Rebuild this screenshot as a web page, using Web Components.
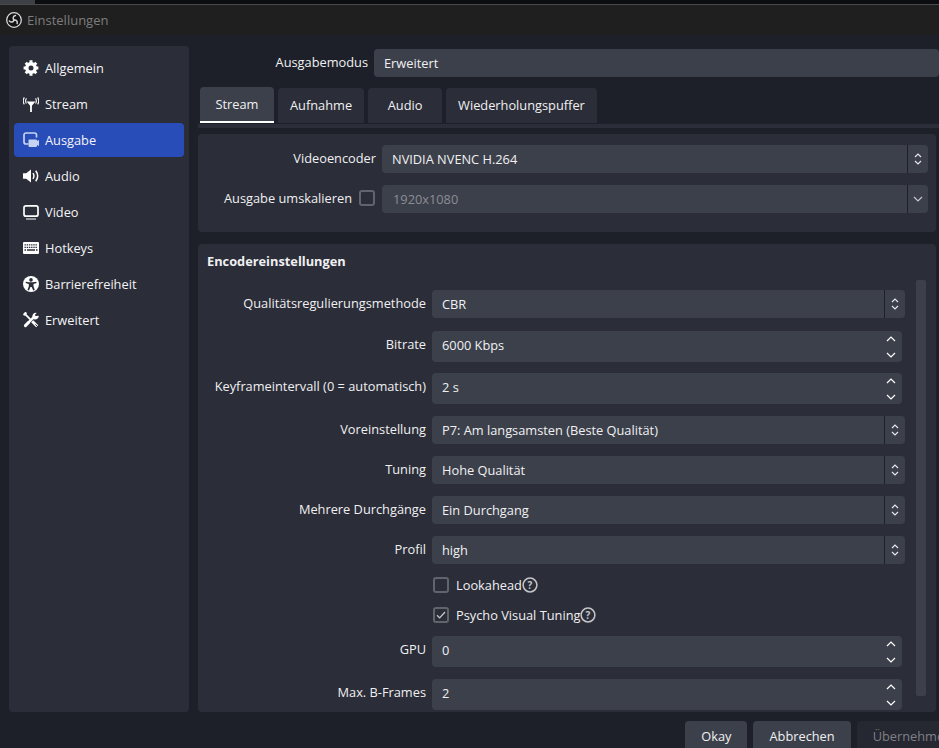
<!DOCTYPE html>
<html lang="de">
<head>
<meta charset="utf-8">
<title>Einstellungen</title>
<style>
  html, body { margin: 0; height: 100%; background: #1e2029; overflow: hidden; }
  body { font: 12.8px "Open Sans", "Liberation Sans", sans-serif; color: #f0f0f2; }
</style>
</head>
<body>
<settings-window>
  <settings-nav slot="nav">
    <nav-item icon="gear">Allgemein</nav-item>
    <nav-item icon="antenna">Stream</nav-item>
    <nav-item icon="output" active>Ausgabe</nav-item>
    <nav-item icon="speaker">Audio</nav-item>
    <nav-item icon="monitor">Video</nav-item>
    <nav-item icon="keyboard">Hotkeys</nav-item>
    <nav-item icon="person">Barrierefreiheit</nav-item>
    <nav-item icon="tools">Erweitert</nav-item>
  </settings-nav>

  <form-row slot="mode" col="170">
    <span slot="label">Ausgabemodus</span>
    <value-box flat>Erweitert</value-box>
  </form-row>

  <tab-bar slot="tabs">
    <tab-item active>Stream</tab-item>
    <tab-item style="margin-top:1px">Aufnahme</tab-item>
    <tab-item style="margin-top:1px">Audio</tab-item>
    <tab-item style="margin-top:1px">Wiederholungspuffer</tab-item>
  </tab-bar>

  <settings-panel slot="encoder">
    <form-row col="178">
      <span slot="label">Videoencoder</span>
      <value-box>NVIDIA NVENC H.264</value-box>
    </form-row>
    <form-row col="178">
      <span slot="label">Ausgabe umskalieren</span>
      <check-box slot="label" style="margin-right:1px"></check-box>
      <value-box arrow="down" disabled>1920x1080</value-box>
    </form-row>
  </settings-panel>

  <encoder-panel slot="settings">
    <span slot="title">Encodereinstellungen</span>
    <form-row col="228">
      <span slot="label">Qualitätsregulierungsmethode</span>
      <value-box>CBR</value-box>
    </form-row>
    <form-row col="228" style="margin-top:1px">
      <span slot="label">Bitrate</span>
      <value-box spin>6000 Kbps</value-box>
    </form-row>
    <form-row col="228" style="margin-top:-1px">
      <span slot="label">Keyframeintervall (0 = automatisch)</span>
      <value-box spin>2 s</value-box>
    </form-row>
    <form-row col="228">
      <span slot="label">Voreinstellung</span>
      <value-box>P7: Am langsamsten (Beste Qualität)</value-box>
    </form-row>
    <form-row col="228">
      <span slot="label">Tuning</span>
      <value-box>Hohe Qualität</value-box>
    </form-row>
    <form-row col="228">
      <span slot="label">Mehrere Durchgänge</span>
      <value-box>Ein Durchgang</value-box>
    </form-row>
    <form-row col="228">
      <span slot="label">Profil</span>
      <value-box>high</value-box>
    </form-row>
    <form-row col="228">
      <check-box label="Lookahead" help></check-box>
    </form-row>
    <form-row col="228">
      <check-box label="Psycho Visual Tuning" help checked></check-box>
    </form-row>
    <form-row col="228">
      <span slot="label">GPU</span>
      <value-box spin>0</value-box>
    </form-row>
    <form-row col="228">
      <span slot="label">Max. B-Frames</span>
      <value-box spin>2</value-box>
    </form-row>
  </encoder-panel>

  <dialog-button slot="footer">Okay</dialog-button>
  <dialog-button slot="footer">Abbrechen</dialog-button>
  <dialog-button slot="footer" disabled>Übernehmen</dialog-button>
</settings-window>

<script>
const ICONS = {
  gear: `<g fill="none" stroke="currentColor"><circle cx="8" cy="8" r="4.200" stroke-width="3.400"/><path stroke-width="3" d="M8 .2v2.800M8 13v2.800M.6 8h2.800M12.600 8h2.800M2.700 2.700l2 2M11.300 11.300l2 2M2.700 13.300l2-2M11.300 4.700l2-2"/></g>`,
  antenna: `<g fill="none" stroke="currentColor"><path stroke-width="1.800" d="M8 7v9"/><path stroke-width="1.500" d="M5.200 6.300h5.600L8 9.500z" fill="currentColor"/><path stroke-width="1.100" d="M3.400 2.200c-1 1.800-1 3.600 0 5.400M1.300 1.400c-1.400 2.400-1.400 4.800 0 7M12.600 2.200c1 1.800 1 3.600 0 5.400M14.700 1.400c1.400 2.400 1.400 4.800 0 7"/></g>`,
  output: `<path fill="none" stroke="#c6d4f2" stroke-width="1.700" d="M5.500 12H3a2 2 0 0 1-2-2V3a2 2 0 0 1 2-2h8.500a2 2 0 0 1 2 2v2.500"/><path fill="#c6d4f2" d="M6 7.500h7a1 1 0 0 1 1 1V9l2-1v6l-2-1v1a1 1 0 0 1-1 1H6.500a1 1 0 0 1-1-1V8a.5.5 0 0 1 .5-.5z"/>`,
  speaker: `<path fill="currentColor" d="M0 5.300h3.200L8 1.600v12.800L3.200 10.700H0z"/><path fill="none" stroke="currentColor" stroke-width="1.500" d="M10 5.200c1.200 1.800 1.200 3.800 0 5.600M12.700 2.800c2.400 3.200 2.400 7.200 0 10.400"/>`,
  monitor: `<rect x="1" y="1.800" width="14" height="10.400" rx="2" fill="none" stroke="currentColor" stroke-width="1.700"/><path d="M3 15h10" stroke="currentColor" stroke-width="1"/>`,
  keyboard: `<rect y="2" width="16" height="12" rx="1" fill="currentColor"/><path stroke="#2b2d38" stroke-width="1.300" stroke-dasharray="1.400 .8" d="M1.500 4.800h13M1.500 7.400h13"/><path stroke="#2b2d38" stroke-width="1.300" d="M1.500 10h1.500M4 10h8M13 10h1.500"/>`,
  person: `<circle cx="8" cy="8" r="8" fill="currentColor"/><circle cx="8" cy="3.900" r="1.800" fill="#2b2d38"/><path fill="#2b2d38" d="M2.800 5.700l3.300.6h3.800l3.300-.6.400 1.300-3.100 1v2.200l1.300 3.700-1.500.5L8.600 11h-1.200l-1.400 3.400-1.500-.5 1.300-3.700V8l-3.100-1z"/>`,
  tools: `<g fill="none" stroke="currentColor"><path stroke-width="1.800" d="M1.800 1.800l6 6"/><path stroke-width="2.600" stroke-linecap="round" d="M1.500 2.300l1-1"/><path stroke-width="2.500" d="M4.800 11.200l6-6"/><path stroke-width="3" stroke-linecap="round" d="M2.400 13.600l3-3"/><path stroke-width="3" d="M9.200 9.200l5 5"/></g><path fill="currentColor" d="M15.800 3.700a3.600 3.600 0 0 1-4.800 3.500L9.600 5.800a3.600 3.600 0 0 1 4.100-4.900l-2 2.100 1 1.100z"/><path stroke="#2b2d38" stroke-width="1" d="M12.400 12.400l2.400 2.400"/>`
};

class NavItem extends HTMLElement {
  constructor() {
    super();
    this.attachShadow({ mode: "open" });
  }
  connectedCallback() {
    const icon = ICONS[this.getAttribute("icon")];
    this.shadowRoot.innerHTML = `
      <style>
        :host { display: flex; align-items: center; gap: 6px; height: 34px; padding-left: 9px; border-radius: 4px; color: #f4f4f6; }
        :host([active]) { background: #284cb8; }
        svg { width: 16px; height: 16px; flex: none; color: #fff; }
      </style>
      <svg viewBox="0 0 16 16">${icon}</svg>
      <span><slot></slot></span>`;
  }
}
customElements.define("nav-item", NavItem);

class SettingsNav extends HTMLElement {
  constructor() {
    super();
    this.attachShadow({ mode: "open" });
    this.shadowRoot.innerHTML = `
      <style>
        :host { display: flex; flex-direction: column; gap: 2px; box-sizing: border-box; width: 180px; height: 666px; padding: 5px; background: #2b2d38; border-radius: 4px; }
      </style>
      <slot></slot>`;
  }
}
customElements.define("settings-nav", SettingsNav);

class TabItem extends HTMLElement {
  constructor() {
    super();
    this.attachShadow({ mode: "open" });
    this.shadowRoot.innerHTML = `
      <style>
        :host { display: flex; align-items: center; justify-content: center; box-sizing: border-box; height: 35px; min-width: 74px; padding: 0 12px 1px; background: #2b2d38; border-radius: 4px 4px 0 0; }
        :host([active]) { height: 36px; padding-bottom: 0; background: #3c404b; border-bottom: 2px solid #fff; }
      </style>
      <slot></slot>`;
  }
}
customElements.define("tab-item", TabItem);

class TabBar extends HTMLElement {
  constructor() {
    super();
    this.attachShadow({ mode: "open" });
    this.shadowRoot.innerHTML = `
      <style>
        :host { display: block; }
        .tabs { display: flex; gap: 4px; padding-left: 2px; }
        .line { height: 4px; margin-top: 1px; background: #2b2d38; }
      </style>
      <div class="tabs"><slot></slot></div>
      <div class="line"></div>`;
  }
}
customElements.define("tab-bar", TabBar);

class ValueBox extends HTMLElement {
  constructor() {
    super();
    this.attachShadow({ mode: "open" });
  }
  connectedCallback() {
    const spin = this.hasAttribute("spin");
    const down = this.getAttribute("arrow") === "down";
    const flat = this.hasAttribute("flat");
    let arrows = `<svg width="10" height="16" viewBox="0 0 10 16"><path d="M2 6l3-3 3 3M2 10l3 3 3-3"/></svg>`;
    if (spin) arrows = `<svg width="12" height="24" viewBox="0 0 12 24"><path d="M2 6l4-4 4 4M2 18l4 4 4-4"/></svg>`;
    if (down) arrows = `<svg width="12" height="10" viewBox="0 0 12 10"><path d="M2 3l4 4 4-4"/></svg>`;
    this.shadowRoot.innerHTML = `
      <style>
        :host { display: flex; align-items: stretch; flex: 1; min-width: 0; height: 28px; background: #3c404b; border-radius: 4px; color: #f0f0f2; }
        :host([spin]) { height: 31px; margin-right: 3px; }
        :host([disabled]) { color: #8b8d93; }
        .text { flex: 1; display: flex; align-items: center; padding-left: 10px; white-space: nowrap; }
        :host([spin]) .text { padding-bottom: 3px; }
        :host([disabled]) .text { padding-left: 11px; }
        .arrows { display: flex; align-items: center; justify-content: center; flex: none; width: 20px; border-left: 1px solid #1e2029; }
        :host([spin]) .arrows { border-left: 0; width: 23px; }
        svg { fill: none; stroke: #e6e6ea; stroke-width: 1.200; }
        :host([spin]) svg { stroke: #fff; }
        :host([disabled]) svg { stroke: #c8c8cc; }
      </style>
      <div class="text"><slot></slot></div>
      ${flat ? "" : `<div class="arrows">${arrows}</div>`}`;
  }
}
customElements.define("value-box", ValueBox);

class CheckBox extends HTMLElement {
  constructor() {
    super();
    this.attachShadow({ mode: "open" });
  }
  connectedCallback() {
    const label = this.getAttribute("label");
    const tick = this.hasAttribute("checked")
      ? `<svg width="16" height="16" viewBox="0 0 16 16"><path d="M4 8.200l2.700 2.700L12 5" fill="none" stroke="#c9cace" stroke-width="1.300"/></svg>` : "";
    const help = this.hasAttribute("help")
      ? `<svg class="help" width="16" height="16" viewBox="0 0 16 16"><circle cx="8" cy="8" r="6.900" fill="none" stroke="#c4c5c9" stroke-width="1.500"/><text x="8" y="11.600" text-anchor="middle" font-size="10" font-weight="700" fill="#c4c5c9">?</text></svg>` : "";
    this.shadowRoot.innerHTML = `
      <style>
        :host { display: inline-flex; align-items: center; height: 18px; }
        :host([label]) { margin-left: 1px; }
        .box { box-sizing: border-box; width: 16px; height: 16px; border: 2px solid #62646c; border-radius: 3px; display: flex; align-items: center; justify-content: center; }
        .box svg { margin: -2px; flex: none; }
        .label { margin-left: 7px; }
        .help { flex: none; }
      </style>
      <div class="box">${tick}</div>
      ${label ? `<span class="label">${label}</span>${help}` : ""}`;
  }
}
customElements.define("check-box", CheckBox);

class FormRow extends HTMLElement {
  constructor() {
    super();
    this.attachShadow({ mode: "open" });
  }
  connectedCallback() {
    const col = this.getAttribute("col");
    this.shadowRoot.innerHTML = `
      <style>
        :host { display: grid; grid-template-columns: ${col}px 1fr; column-gap: 6px; }
        .label { display: flex; justify-content: flex-end; align-items: center; gap: 7px; height: 28px; white-space: nowrap; position: relative; top: -1px; }
        .field { display: flex; grid-column: 2; min-width: 0; }
      </style>
      <div class="label"><slot name="label"></slot></div>
      <div class="field"><slot></slot></div>`;
    const first = this.querySelector("check-box:not([slot])");
    if (first) this.shadowRoot.querySelector(".label").style.height = "18px";
  }
}
customElements.define("form-row", FormRow);

class SettingsPanel extends HTMLElement {
  constructor() {
    super();
    this.attachShadow({ mode: "open" });
    this.shadowRoot.innerHTML = `
      <style>
        :host { display: flex; flex-direction: column; gap: 12px; box-sizing: border-box; height: 98px; padding: 11px 8px 0 0; background: #2b2d38; border-radius: 4px; margin-right: 3px; }
      </style>
      <slot></slot>`;
  }
}
customElements.define("settings-panel", SettingsPanel);

class EncoderPanel extends HTMLElement {
  constructor() {
    super();
    this.attachShadow({ mode: "open" });
    this.shadowRoot.innerHTML = `
      <style>
        :host { display: block; box-sizing: border-box; height: 468px; margin-right: 3px; background: #2b2d38; border-radius: 4px; overflow: hidden; }
        .title { height: 18px; padding: 8px 0 10px 9px; font-weight: 700; line-height: 18px; }
        .body { display: flex; }
        .rows { flex: 1; min-width: 0; display: flex; flex-direction: column; gap: 12px; padding-top: 10px; }
        .thumb { flex: none; width: 10px; height: 416px; margin: 0 10px 0 11px; background: #3c404b; border-radius: 2px; }
      </style>
      <div class="title"><slot name="title"></slot></div>
      <div class="body">
        <div class="rows"><slot></slot></div>
        <div class="thumb"></div>
      </div>`;
  }
}
customElements.define("encoder-panel", EncoderPanel);

class DialogButton extends HTMLElement {
  constructor() {
    super();
    this.attachShadow({ mode: "open" });
    this.shadowRoot.innerHTML = `
      <style>
        :host { display: flex; align-items: center; justify-content: center; box-sizing: border-box; height: 30px; padding: 0 16px; background: #3c404b; border-radius: 4px; color: #f0f0f2; flex: none; }
        :host([disabled]) { background: #252731; color: #7f8085; margin-right: -29px; }
      </style>
      <slot></slot>`;
  }
}
customElements.define("dialog-button", DialogButton);

class SettingsWindow extends HTMLElement {
  constructor() {
    super();
    this.attachShadow({ mode: "open" });
    this.shadowRoot.innerHTML = `
      <style>
        :host { display: flex; flex-direction: column; height: 748px; overflow: hidden; }
        .strip { flex: none; height: 4px; background: #0c0d10; border-bottom: 1px solid #4a4a4a; display: flex; }
        .strip i { width: 35px; background: #3d4046; }
        .titlebar { flex: none; display: flex; align-items: center; gap: 5px; height: 30px; padding-left: 6px; background: #1f1f1f; color: #7d7d7d; font-size: 13px; }
        .titlebar svg { flex: none; }
        .main { display: flex; gap: 9px; padding: 11px 0 0 9px; flex: none; }
        .right { flex: 1; min-width: 0; display: flex; flex-direction: column; padding-top: 3px; }
        .tabs { margin-top: 10px; }
        .encoder { margin-top: 6px; }
        .settings { margin-top: 12px; }
        .footer { display: flex; justify-content: flex-end; gap: 6px; padding-top: 9px; }
      </style>
      <div class="strip"><i></i></div>
      <div class="titlebar">
        <svg width="16" height="16" viewBox="0 0 16 16">
          <circle cx="8" cy="8" r="7.300" fill="#141414" stroke="#d8d8d8" stroke-width="1.300"/>
          <g fill="none" stroke="#d4d4d4" stroke-width="1.500" stroke-linecap="round">
            <path d="M8 8C6.500 6.500 7 4 9.500 3.500"/>
            <path d="M8 8C6.500 6.500 7 4 9.500 3.500" transform="rotate(120 8 8)"/>
            <path d="M8 8C6.500 6.500 7 4 9.500 3.500" transform="rotate(240 8 8)"/>
          </g>
        </svg>
        <span>Einstellungen</span>
      </div>
      <div class="main">
        <slot name="nav"></slot>
        <div class="right">
          <slot name="mode"></slot>
          <div class="tabs"><slot name="tabs"></slot></div>
          <div class="encoder"><slot name="encoder"></slot></div>
          <div class="settings"><slot name="settings"></slot></div>
        </div>
      </div>
      <div class="footer"><slot name="footer"></slot></div>`;
  }
}
customElements.define("settings-window", SettingsWindow);
</script>
</body>
</html>
